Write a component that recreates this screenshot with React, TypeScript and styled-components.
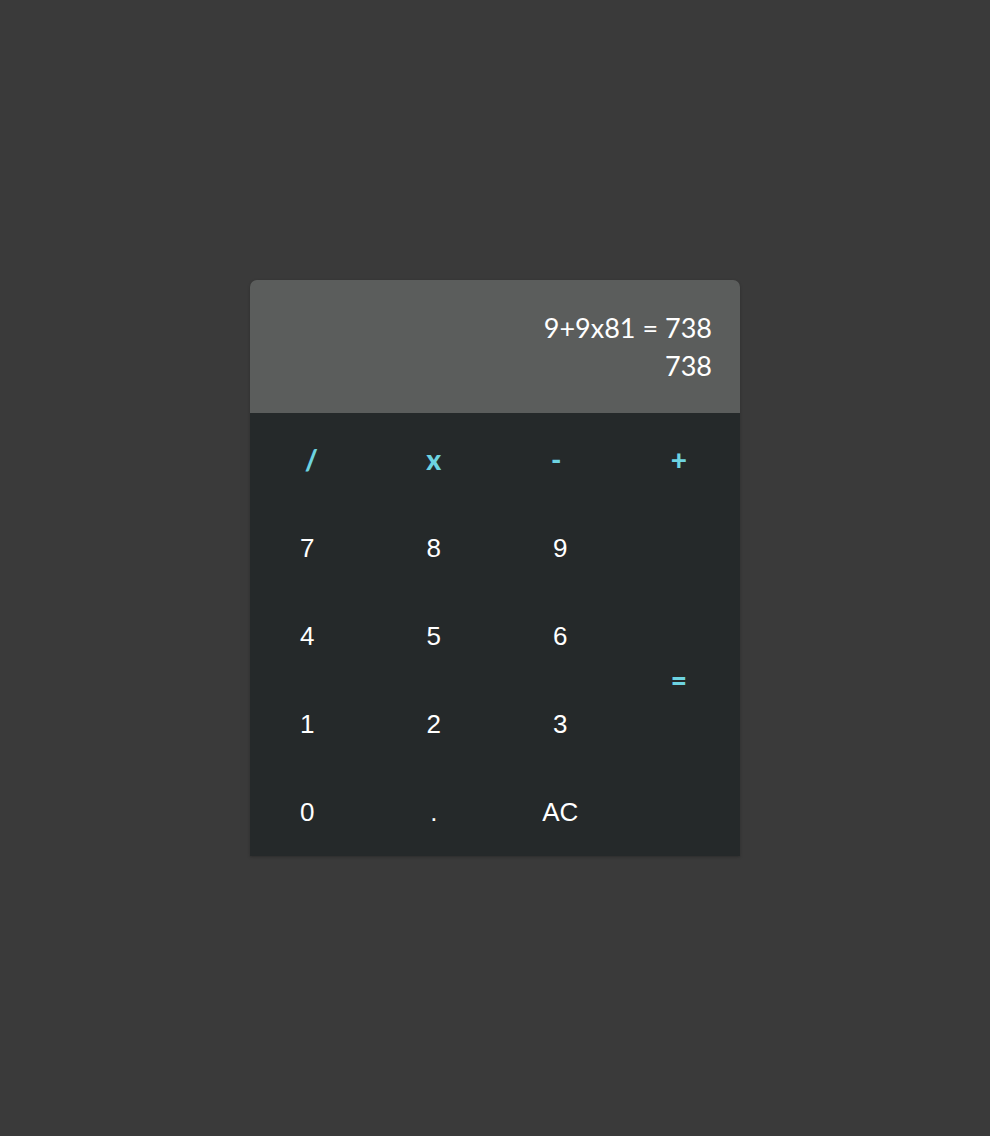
import React from "react";
import styled, { createGlobalStyle } from "styled-components";

const GlobalStyle = createGlobalStyle`
    html, body {
        margin: 0;
        padding: 0;
        background-color: #3a3a3a;
    }
    #root {
        min-height: 100vh;
    }
`;

const Page = styled.div`
    min-height: 1136px;
    display: flex;
    justify-content: center;
    padding-top: 280px;
    box-sizing: border-box;
`;

const Calculator = styled.div`
    width: 490px;
    align-self: flex-start;
    border-radius: 7px 7px 0 0;
    overflow: hidden;
    box-shadow: 0 1px 3px rgba(0, 0, 0, 0.25);
`;

const Display = styled.div`
    height: 133px;
    box-sizing: border-box;
    background-color: #5b5d5c;
    padding: 29px 28px 0;
    display: flex;
    flex-direction: column;
    align-items: flex-end;
    font-family: Lato, "Open Sans", sans-serif;
    font-size: 27px;
    line-height: 38px;
    color: #ffffff;
`;

const Keypad = styled.div`
    background-color: #25292a;
    display: grid;
    grid-template-columns: repeat(4, 1fr);
    grid-template-rows: 91px 352px;
`;

const Digits = styled.div`
    grid-column: 1 / 4;
    display: grid;
    grid-template-columns: repeat(3, 1fr);
    grid-auto-rows: 88px;
    column-gap: 12px;
`;

const Key = styled.button<{ $op?: boolean }>`
    border: none;
    background: transparent;
    padding: 0;
    margin: 0;
    cursor: pointer;
    display: flex;
    align-items: center;
    justify-content: center;
    color: ${(p) => (p.$op ? "#6dd3e1" : "#ffffff")};
    font-family: ${(p) => (p.$op ? "Lato, sans-serif" : '"Liberation Sans", Arial, sans-serif')};
    font-weight: ${(p) => (p.$op ? 900 : 400)};
    font-size: ${(p) => (p.$op ? "28px" : "26px")};
    :hover {
        opacity: 0.8;
    }
`;

const operators = ["/", "x", "-", "+"];
const digits = ["7", "8", "9", "4", "5", "6", "1", "2", "3", "0", ".", "AC"];

const App = () => {
    return (
        <>
            <GlobalStyle />
            <Page>
                <Calculator>
                    <Display>
                        <div>9+9x81 = 738</div>
                        <div>738</div>
                    </Display>
                    <Keypad>
                        {operators.map((op) => (
                            <Key key={op} $op>
                                {op}
                            </Key>
                        ))}
                        <Digits>
                            {digits.map((d) => (
                                <Key key={d}>{d}</Key>
                            ))}
                        </Digits>
                        <Key $op>=</Key>
                    </Keypad>
                </Calculator>
            </Page>
        </>
    );
};

export default App;
